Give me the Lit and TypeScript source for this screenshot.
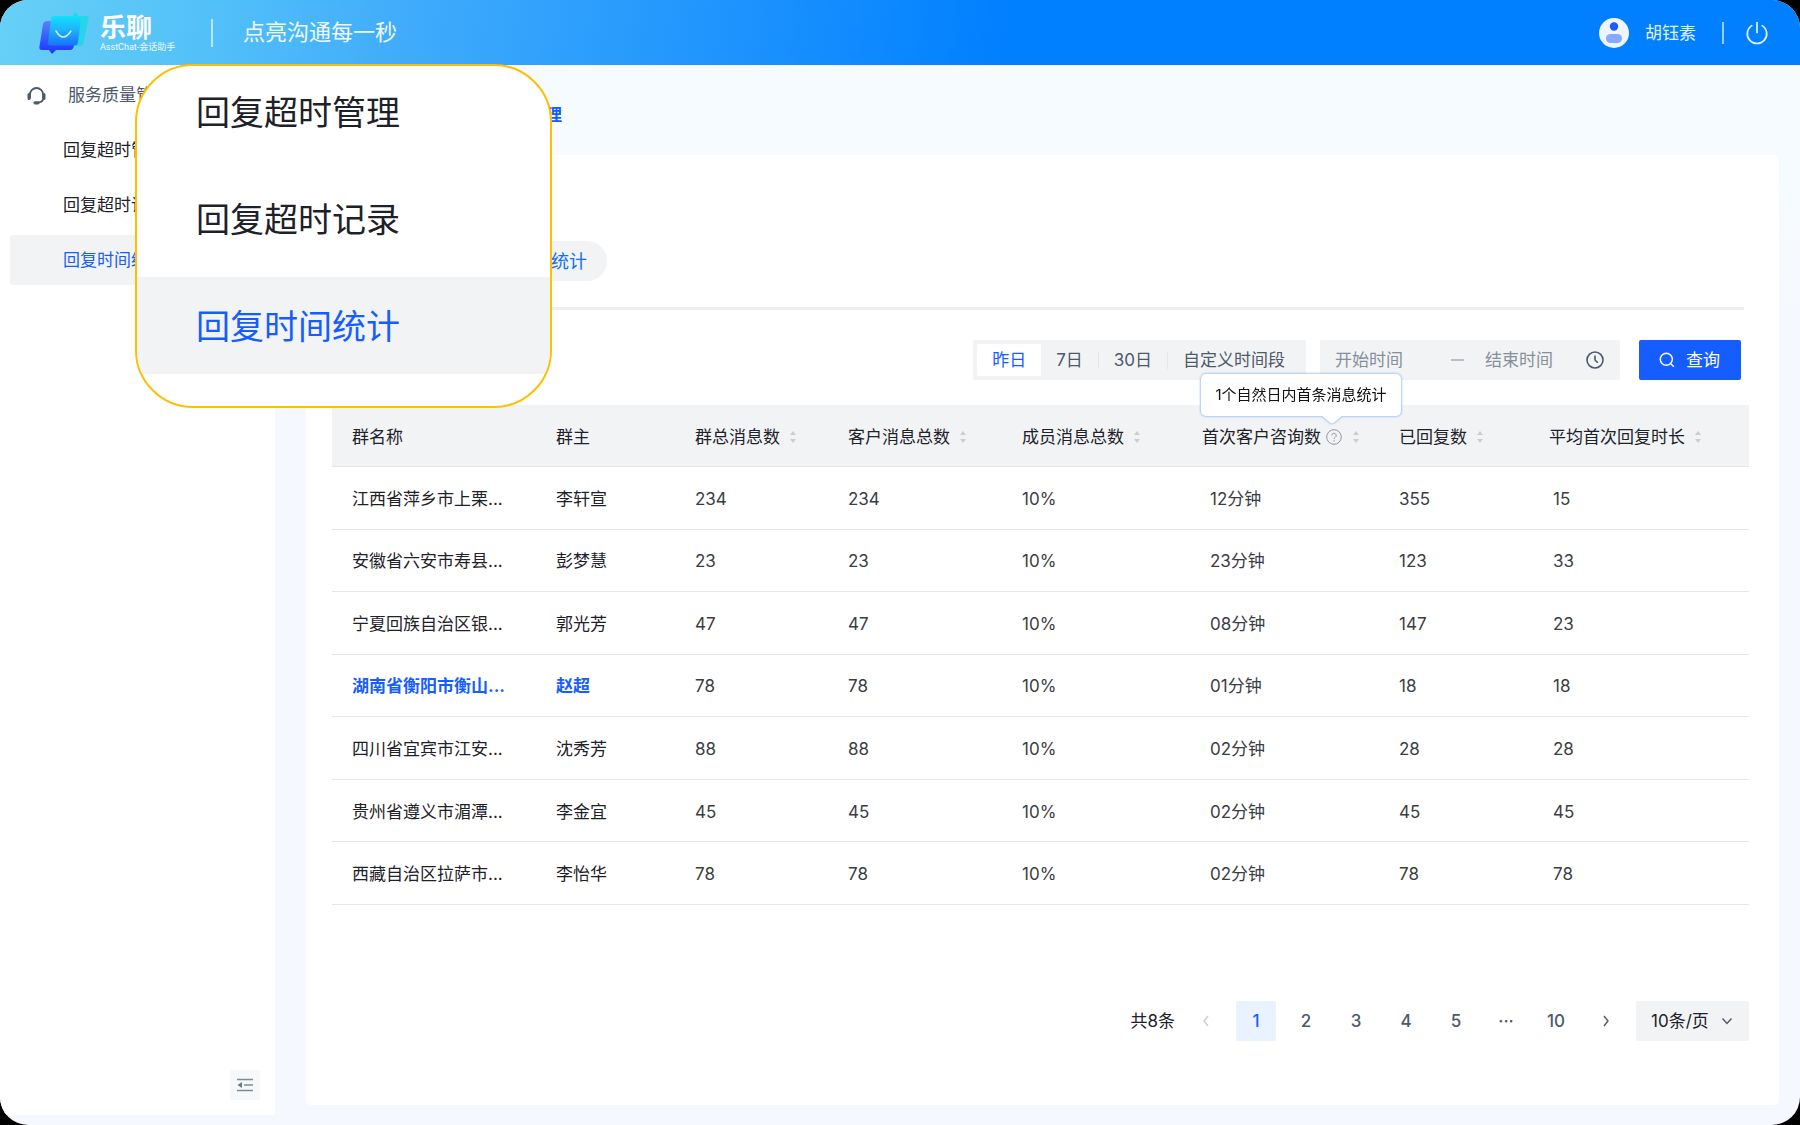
import { LitElement, html, css, svg, nothing } from "lit";
import { customElement, state } from "lit/decorators.js";
import { classMap } from "lit/directives/class-map.js";

interface Column {
  label: string;
  width: number;
  sortable: boolean;
  hint?: string;
}

interface Row {
  name: string;
  owner: string;
  values: string[];
  highlighted?: boolean;
}

const COLUMNS: Column[] = [
  { label: "群名称", width: 204, sortable: false },
  { label: "群主", width: 139, sortable: false },
  { label: "群总消息数", width: 153, sortable: true },
  { label: "客户消息总数", width: 174, sortable: true },
  { label: "成员消息总数", width: 180, sortable: true },
  { label: "首次客户咨询数", width: 197, sortable: true, hint: "1个自然日内首条消息统计" },
  { label: "已回复数", width: 150, sortable: true },
  { label: "平均首次回复时长", width: 0, sortable: true },
];

const ROWS: Row[] = [
  { name: "江西省萍乡市上栗...", owner: "李轩宣", values: ["234", "234", "10%", "12分钟", "355", "15"] },
  { name: "安徽省六安市寿县...", owner: "彭梦慧", values: ["23", "23", "10%", "23分钟", "123", "33"] },
  { name: "宁夏回族自治区银...", owner: "郭光芳", values: ["47", "47", "10%", "08分钟", "147", "23"] },
  { name: "湖南省衡阳市衡山...", owner: "赵超", values: ["78", "78", "10%", "01分钟", "18", "18"], highlighted: true },
  { name: "四川省宜宾市江安...", owner: "沈秀芳", values: ["88", "88", "10%", "02分钟", "28", "28"] },
  { name: "贵州省遵义市湄潭...", owner: "李金宜", values: ["45", "45", "10%", "02分钟", "45", "45"] },
  { name: "西藏自治区拉萨市...", owner: "李怡华", values: ["78", "78", "10%", "02分钟", "78", "78"] },
];

const MENU = ["回复超时管理", "回复超时记录", "回复时间统计"];
const PERIODS = ["昨日", "7日", "30日", "自定义时间段"];
const PAGES = ["1", "2", "3", "4", "5", "···", "10"];

const chevron = (d: string) =>
  html`<svg class="chevron" viewBox="0 0 12 12" width="12" height="12" aria-hidden="true">${svg`<path d=${d} />`}</svg>`;

@customElement("app-header")
export class AppHeader extends LitElement {
  static styles = css`
    :host {
      display: block;
    }
    .bar {
      display: flex;
      align-items: center;
      height: 65px;
      box-sizing: border-box;
      padding: 0 31px 0 39px;
      color: #fff;
      background: linear-gradient(98deg, #67d0f6 0%, #52c0f9 12%, #3fabfb 23%, #007fff 56%);
    }
    .logo {
      display: block;
      margin-right: 11px;
    }
    .brand {
      display: flex;
      flex-direction: column;
      width: 111px;
    }
    .brand-name {
      font-size: 26px;
      line-height: 28px;
      font-weight: 700;
    }
    .brand-sub {
      font-family: Roboto, "Noto Sans CJK SC", sans-serif;
      font-size: 9px;
      line-height: 10px;
      white-space: nowrap;
      color: #f0f9ff;
    }
    .rule {
      width: 2px;
      height: 28px;
      background: rgba(255, 255, 255, 0.6);
    }
    .slogan {
      margin-left: 30px;
      padding-bottom: 2px;
      font-size: 22px;
      line-height: 32px;
      color: #f0f9ff;
    }
    .user {
      display: flex;
      align-items: center;
      margin-left: auto;
      font-size: 17px;
      color: #e3f1ff;
    }
    .avatar {
      margin-right: 16px;
    }
    .user .rule {
      height: 22px;
      margin: 0 21px 0 26px;
    }
    .power {
      display: flex;
      padding: 0;
      border: 0;
      background: none;
      cursor: pointer;
    }
  `;

  render() {
    return html`
      <header class="bar">
        <svg class="logo" viewBox="0 0 50 44" width="50" height="44" aria-hidden="true">
          <defs>
            <linearGradient id="back" x1="0" y1="0" x2="0" y2="1">
              <stop offset="0" stop-color="#5a83f8" />
              <stop offset="0.6" stop-color="#2f55ff" />
              <stop offset="1" stop-color="#1f32ff" />
            </linearGradient>
            <linearGradient id="front" x1="0" y1="0" x2="0" y2="1">
              <stop offset="0" stop-color="#12e0fb" />
              <stop offset="0.45" stop-color="#1fb4ff" />
              <stop offset="1" stop-color="#1673ff" />
            </linearGradient>
          </defs>
          <path
            d="M16 5h18l2-4 4 4h8q2 0 1.600 2l-5 25q-.6 3-3.600 3H12z"
            fill="#27d5e8"
          />
          <path
            d="M9 10h28l-2 24q-.4 5-4 5H17l-4 4-3-4H3q-3 0-2.600-3L4 13q.6-3 5-3z"
            fill="url(#back)"
          />
          <path d="M15 5h25q2.500 0 2 3l-3 23q-.4 3.500-4 3.500H11q-2.500 0-2-3.500l3-23q.4-3 3-3z" fill="url(#front)" />
          <path d="M17 20q7 12 15 0" fill="none" stroke="#c8f0ff" stroke-width="1.500" stroke-linecap="round" />
        </svg>
        <div class="brand">
          <span class="brand-name">乐聊</span>
          <span class="brand-sub">AsstChat-会话助手</span>
        </div>
        <span class="rule"></span>
        <span class="slogan">点亮沟通每一秒</span>
        <div class="user">
          <svg class="avatar" viewBox="0 0 30 30" width="30" height="30" aria-hidden="true">
            <circle cx="15" cy="15" r="15" fill="#eff5ff" />
            <circle cx="15" cy="8.500" r="4.200" fill="#1d5bff" />
            <rect x="7" y="16" width="16" height="9" rx="4.500" fill="#87a9ff" />
          </svg>
          <span>胡钰素</span>
          <span class="rule"></span>
          <button class="power" type="button" aria-label="退出">
            <svg viewBox="0 0 24 24" width="24" height="24" fill="none" stroke="#e3f1ff" stroke-width="1.700" stroke-linecap="round">
              <path d="M6.800 4.600a9.700 9.700 0 1 0 10.400 0" />
              <path d="M12 1.500v10" />
            </svg>
          </button>
        </div>
      </header>
    `;
  }
}

@customElement("app-sidebar")
export class AppSidebar extends LitElement {
  static styles = css`
    :host {
      display: flex;
      flex-direction: column;
      background: #fff;
    }
    .nav {
      display: flex;
      flex-direction: column;
      gap: 5px;
      padding: 5px 0 0 10px;
    }
    .group {
      display: flex;
      align-items: center;
      gap: 22px;
      height: 50px;
      padding-left: 17px;
      color: #4e5969;
    }
    .item {
      height: 50px;
      padding-left: 53px;
      line-height: 51px;
      color: #1d2129;
      text-decoration: none;
      border-radius: 3px;
    }
    .item.active {
      color: #165dff;
      background: #f2f3f5;
    }
    .fold {
      display: flex;
      align-items: center;
      justify-content: center;
      width: 30px;
      height: 30px;
      margin: auto 15px 15px auto;
      padding: 0;
      border: 0;
      border-radius: 2px;
      background: #f7f8fa;
      cursor: pointer;
    }
  `;

  render() {
    return html`
      <nav class="nav">
        <div class="group">
          <svg viewBox="0 0 19 19" width="19" height="19" aria-hidden="true" fill="none" stroke="#4e5969">
            <path d="M3 12.500V8.500a6.500 6.500 0 0 1 13 0v4q0 3.500-4.500 4" stroke-width="1.800" />
            <path d="M2 8.500v4M17 8.500v4" stroke-width="3" stroke-linecap="round" />
            <path d="M8 16.800h3" stroke-width="3.200" stroke-linecap="round" />
          </svg>
          <span>服务质量管理</span>
        </div>
        ${MENU.map(
          (label, i) => html`<a href="#" class=${classMap({ item: true, active: i === 2 })}>${label}</a>`,
        )}
      </nav>
      <button class="fold" type="button" aria-label="收起菜单">
        <svg viewBox="0 0 16 16" width="16" height="16" fill="none" stroke="#7e8b9d" stroke-width="1.700">
          <path d="M0 2.500h16M7 8h9M0 13.500h16" />
          <path d="M5 5v6L.5 8z" fill="#6b788b" stroke="none" />
        </svg>
      </button>
    `;
  }
}

@customElement("stats-filters")
export class StatsFilters extends LitElement {
  @state() private period = 0;

  static styles = css`
    :host {
      display: flex;
      justify-content: flex-end;
      height: 40px;
    }
    button,
    input {
      font: inherit;
      border: 0;
    }
    .periods {
      display: flex;
      align-items: center;
      box-sizing: border-box;
      padding: 0 6px 0 4px;
      margin-right: 14px;
      border-radius: 2px;
      background: #f2f3f5;
    }
    .period {
      height: 32px;
      padding: 0 15px;
      border-radius: 2px;
      color: #4e5969;
      background: none;
      cursor: pointer;
    }
    .period.active {
      color: #165dff;
      background: #fff;
    }
    .tick {
      width: 1px;
      height: 17px;
      background: #e5e6eb;
    }
    .range {
      display: flex;
      align-items: center;
      width: 300px;
      box-sizing: border-box;
      padding: 0 16px 0 15px;
      margin-right: 19px;
      border-radius: 2px;
      background: #f2f3f5;
    }
    .date {
      flex: 1;
      min-width: 0;
      padding: 0;
      color: #4e5969;
      background: none;
      outline: none;
    }
    .date.start {
      flex: 0 0 116px;
    }
    .date::placeholder {
      color: #86909c;
      opacity: 1;
    }
    .dash {
      width: 13px;
      height: 2px;
      margin-right: 21px;
      background: #b9bfc9;
    }
    .search {
      display: flex;
      align-items: center;
      gap: 11px;
      width: 102px;
      padding: 0 0 0 20px;
      border-radius: 2px;
      color: #fff;
      background: #165dff;
      cursor: pointer;
    }
  `;

  render() {
    return html`
      <div class="periods" role="group" aria-label="统计周期">
        ${PERIODS.map(
          (label, i) => html`
            ${i > 1 ? html`<span class="tick"></span>` : nothing}
            <button
              type="button"
              class=${classMap({ period: true, active: i === this.period })}
              aria-pressed=${i === this.period}
              @click=${() => (this.period = i)}
            >${label}</button>
          `,
        )}
      </div>
      <div class="range">
        <input class="date start" type="text" placeholder="开始时间" aria-label="开始时间" />
        <span class="dash"></span>
        <input class="date" type="text" placeholder="结束时间" aria-label="结束时间" />
        <svg viewBox="0 0 18 18" width="18" height="18" fill="none" stroke="#4e5969" stroke-width="1.600" aria-hidden="true">
          <circle cx="9" cy="9" r="8" />
          <path d="M9 4.500V9l2.800 2.800" />
        </svg>
      </div>
      <button class="search" type="button">
        <svg viewBox="0 0 16 16" width="16" height="16" fill="none" stroke="#fff" stroke-width="1.400" aria-hidden="true">
          <circle cx="7.300" cy="7.300" r="6" />
          <path d="M11.800 11.800l3 3" />
        </svg>
        <span>查询</span>
      </button>
    `;
  }
}

@customElement("stats-table")
export class StatsTable extends LitElement {
  static styles = css`
    :host {
      display: block;
    }
    .table {
      width: 100%;
      height: 500px;
      table-layout: fixed;
      border-collapse: separate;
      border-spacing: 0;
      color: #1d2129;
    }
    .head,
    .cell {
      padding: 2px 0 0 20px;
      text-align: left;
      font-weight: 400;
      line-height: 24px;
      white-space: nowrap;
      border-bottom: 1px solid #e5e6eb;
    }
    .head {
      height: 59px;
      background: #f2f3f5;
    }
    .cell.value {
      color: #3a3d43;
    }
    .cell.minutes {
      padding-left: 28px;
    }
    .cell.average {
      padding-left: 24px;
    }
    .cell.highlighted {
      color: #165dff;
      font-weight: 700;
    }
    .title {
      display: flex;
      align-items: center;
    }
    .sort {
      display: flex;
      margin-left: 9px;
      padding: 0;
      border: 0;
      background: none;
      cursor: pointer;
    }
    .help {
      position: relative;
      display: flex;
      margin: 0 1px 0 5px;
    }
    .tip {
      position: absolute;
      right: -59px;
      bottom: 29px;
      width: 200px;
      box-sizing: border-box;
      padding: 9px 0;
      text-align: center;
      font-size: 15px;
      line-height: 24px;
      color: #111;
      border-radius: 5px;
      background: #fff;
      filter: drop-shadow(0 0 1px #8db5f5) drop-shadow(0 0 1px #b5cff9);
    }
    .arrow {
      position: absolute;
      left: 120px;
      top: 41px;
    }
  `;

  private heading(column: Column) {
    return html`
      <th class="head" scope="col">
        <span class="title">
          <span>${column.label}</span>
          ${column.hint
            ? html`<span class="help">
                <svg viewBox="0 0 16 16" width="16" height="16" fill="none" stroke="#93969c" aria-hidden="true">
                  <circle cx="8" cy="8" r="7.300" />
                  <path d="M5.800 6.500a2.200 2.200 0 1 1 3.300 1.900q-1.100.6-1.100 1.600" />
                  <path d="M8 11.200v1.300" />
                </svg>
                <span class="tip" role="tooltip">
                  ${column.hint}
                  <svg class="arrow" viewBox="0 0 22 9" width="22" height="9" aria-hidden="true">
                    <path d="M0 0h22l-9 7.500q-2 1.500-4 0z" fill="#fff" />
                  </svg>
                </span>
              </span>`
            : nothing}
          ${column.sortable
            ? html`<button class="sort" type="button" aria-label=${"排序 " + column.label}>
                <svg viewBox="0 0 8 14" width="8" height="14" fill="#c9cdd4">
                  <path d="M4 1l3 4H1zM4 13l3-4H1z" />
                </svg>
              </button>`
            : nothing}
        </span>
      </th>
    `;
  }

  render() {
    return html`
      <table class="table">
        <colgroup>
          ${COLUMNS.map((c) => html`<col style=${c.width ? `width:${c.width}px` : ""} />`)}
        </colgroup>
        <thead>
          <tr>${COLUMNS.map((c) => this.heading(c))}</tr>
        </thead>
        <tbody>
          ${ROWS.map(
            (row) => html`
              <tr>
                <td class=${classMap({ cell: true, highlighted: !!row.highlighted })}>${row.name}</td>
                <td class=${classMap({ cell: true, highlighted: !!row.highlighted })}>${row.owner}</td>
                ${row.values.map(
                  (value, i) => html`<td class=${classMap({ cell: true, value: true, minutes: i === 3, average: i === 5 })}>${value}</td>`,
                )}
              </tr>
            `,
          )}
        </tbody>
      </table>
    `;
  }
}

@customElement("stats-pager")
export class StatsPager extends LitElement {
  @state() private page = "1";

  static styles = css`
    :host {
      display: flex;
      align-items: center;
      justify-content: flex-end;
      gap: 10px;
      color: #1d2129;
    }
    .total {
      margin-right: 1px;
    }
    .page {
      display: flex;
      align-items: center;
      justify-content: center;
      width: 40px;
      height: 40px;
      padding: 0;
      border: 0;
      border-radius: 2px;
      font: inherit;
      font-weight: 500;
      color: #4e5969;
      background: none;
      cursor: pointer;
    }
    .page.current {
      color: #165dff;
      background: #e8f3ff;
    }
    .chevron {
      fill: none;
      stroke: currentColor;
      stroke-width: 1.400px;
    }
    .page.disabled {
      color: #c9cdd4;
    }
    .size {
      position: relative;
      display: flex;
      align-items: center;
      color: #4e5969;
    }
    .size .chevron {
      position: absolute;
      right: 16px;
      pointer-events: none;
    }
    .select {
      width: 113px;
      height: 40px;
      padding: 0 0 0 15px;
      border: 0;
      border-radius: 2px;
      appearance: none;
      font: inherit;
      color: #1d2129;
      background: #f2f3f5;
    }
  `;

  render() {
    return html`
      <span class="total">共8条</span>
      <button class="page disabled" type="button" aria-label="上一页" disabled>${chevron("M8 1L4 6l4 5")}</button>
      ${PAGES.map(
        (p) => html`<button
          type="button"
          class=${classMap({ page: true, current: p === this.page })}
          @click=${() => (this.page = p)}
        >${p}</button>`,
      )}
      <button class="page" type="button" aria-label="下一页">${chevron("M4 1l4 5-4 5")}</button>
      <label class="size">
        <select class="select" aria-label="每页条数">
          <option>10条/页</option>
        </select>
        ${chevron("M1.500 3.500L6 8.500l4.500-5")}
      </label>
    `;
  }
}

@customElement("app-root")
export class AppRoot extends LitElement {
  static styles = css`
    :host {
      display: block;
      background: #000;
      font-family: Inter, "Noto Sans CJK SC", sans-serif;
      font-size: 17px;
      line-height: 24px;
    }
    .window {
      position: relative;
      display: flex;
      flex-direction: column;
      min-height: 100vh;
      overflow: hidden;
      border-radius: 28px;
      background: linear-gradient(180deg, #f6fbff 0%, #f6fbff 16%, #f5f8ff 32%);
    }
    .body {
      display: flex;
      flex: 1;
    }
    .side {
      width: 275px;
      margin-bottom: 10px;
    }
    .main {
      display: flex;
      flex: 1;
      flex-direction: column;
      min-width: 0;
      padding: 0 21px 20px 31px;
    }
    .crumbs {
      display: flex;
      align-items: center;
      height: 90px;
      padding: 10px 0 0 154px;
      box-sizing: border-box;
    }
    .crumb {
      color: #165dff;
      font-weight: 700;
      text-decoration: none;
    }
    .card {
      display: flex;
      flex: 1;
      flex-direction: column;
      box-sizing: border-box;
      padding: 86px 30px 64px 26px;
      border-radius: 5px;
      background: #fff;
    }
    .tabs {
      display: flex;
      padding-left: 127px;
    }
    .tab {
      height: 40px;
      padding: 2px 20px 0;
      border: 0;
      border-radius: 20px;
      font: inherit;
      font-size: 18px;
      color: #0f6fff;
      background: #f2f3f5;
    }
    .divider {
      height: 3px;
      margin: 26px 5px 30px 0;
      background: #eee;
    }
    .filters {
      margin: 0 8px 25px 0;
    }
    .pager {
      margin-top: auto;
    }
    .lens {
      position: absolute;
      left: 135px;
      top: 64px;
      display: flex;
      flex-direction: column;
      gap: 10px;
      width: 417px;
      height: 344px;
      box-sizing: border-box;
      overflow: hidden;
      border: 2px solid #ffbf00;
      border-radius: 58px;
      background: #fff;
    }
    .zoomed {
      height: 97px;
      padding-left: 59px;
      font-size: 34px;
      line-height: 99px;
      color: #1d2129;
    }
    .zoomed:first-child {
      margin-top: -3px;
    }
    .zoomed.active {
      color: #165dff;
      background: #f2f3f5;
    }
  `;

  render() {
    return html`
      <div class="window">
        <app-header></app-header>
        <div class="body">
          <app-sidebar class="side"></app-sidebar>
          <main class="main">
            <div class="crumbs">
              <a class="crumb" href="#">回复超时管理</a>
            </div>
            <section class="card">
              <div class="tabs">
                <button class="tab" type="button">回复时间统计</button>
              </div>
              <div class="divider"></div>
              <stats-filters class="filters"></stats-filters>
              <stats-table></stats-table>
              <stats-pager class="pager"></stats-pager>
            </section>
          </main>
        </div>
        <div class="lens">
          ${MENU.map(
            (label, i) => html`<div class=${classMap({ zoomed: true, active: i === 2 })}>${label}</div>`,
          )}
        </div>
      </div>
    `;
  }
}
